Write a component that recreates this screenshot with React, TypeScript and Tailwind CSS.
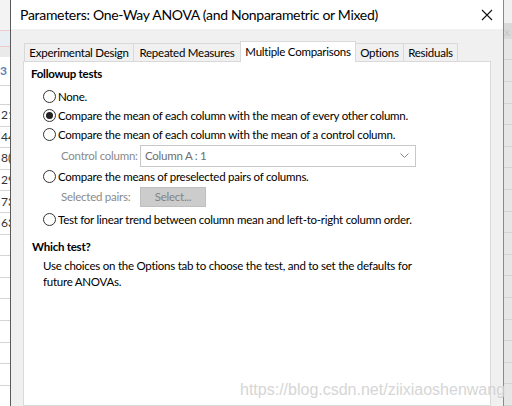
import React from "react";

const ui = { fontFamily: 'Lato, "Liberation Sans", sans-serif' };

const Radio = ({ checked }: { checked?: boolean }) => (
  <span className="w-[13px] h-[13px] rounded-full border border-[#333] bg-white flex items-center justify-center shrink-0">
    {checked && <span className="w-[7px] h-[7px] rounded-full bg-[#222]" />}
  </span>
);

const Option = ({ label, checked }: { label: string; checked?: boolean }) => (
  <div className="flex items-center gap-[2px] h-[19px] whitespace-nowrap">
    <Radio checked={checked} />
    <span>{label}</span>
  </div>
);

const SheetRows = ({ cells }: { cells: string[] }) => (
  <div className="flex flex-col">
    {cells.map((c, i) => (
      <div key={i} className="h-[21.6px] border-b border-[#d4d4d4] flex items-center text-[12px] text-[#333] overflow-hidden whitespace-nowrap pl-[1px]">
        {c}
      </div>
    ))}
  </div>
);

export default function App() {
  const tabs = [
    { t: "Experimental Design", w: "w-[110px]" },
    { t: "Repeated Measures", w: "w-[108px]" },
    { t: "Multiple Comparisons", w: "w-[116px]" },
    { t: "Options", w: "w-[49px]" },
    { t: "Residuals", w: "w-[55px]" },
  ];
  return (
    <div className="relative w-[512px] h-[406px] overflow-hidden flex bg-white" style={ui}>
      {/* sheet left */}
      <div className="w-[10px] shrink-0 bg-white flex flex-col">
        <div className="h-[30px] bg-[#f3f3f3]" />
        <div className="h-[17px] bg-[#e9eef5] border-y border-[#f2c9c9]" />
        <div className="h-[10px] bg-[#eaeaea]" />
        <div className="h-[28px] bg-white flex items-center text-[12px] text-[#5b7fb5] font-bold">3</div>
        <div className="h-[20px] border-y border-[#d4d4d4]" />
        <SheetRows cells={["21", "44", "8(", "29", "73", "63", "", "", "", "", "", "", ""]} />
      </div>
      <div className="w-px bg-[#5a5a5a] shrink-0" />

      {/* dialog */}
      <div className="flex-1 flex flex-col bg-[#f0f0f0] min-w-0">
        <div className="h-[29px] bg-white flex items-center justify-between pl-[9px] pr-[10px] shrink-0">
          <span className="text-[14px] tracking-[-0.3px] text-black whitespace-nowrap">Parameters: One-Way ANOVA (and Nonparametric or Mixed)</span>
          <svg width="12" height="12" viewBox="0 0 12 12">
            <path d="M1 1 L11 11 M11 1 L1 11" stroke="#111" strokeWidth="1.1" />
          </svg>
        </div>
        <div className="flex-1 flex flex-col pl-[12px] pr-[12px] pt-[11px]">
          <div className="flex items-end h-[21px] pl-[1px] text-[11.5px] tracking-[-0.25px] text-black whitespace-nowrap">
            {tabs.map(({ t, w }) =>
              t === "Multiple Comparisons" ? (
                <div key={t} className={`${w} h-[21px] -mb-px -ml-px bg-white border border-b-0 border-[#d9d9d9] flex items-center justify-center relative z-10`}>
                  {t}
                </div>
              ) : (
                <div key={t} className={`${w} h-[18px] bg-[#f0f0f0] border border-b-0 border-[#d9d9d9] -ml-px first:ml-0 flex items-center justify-center`}>
                  {t}
                </div>
              )
            )}
          </div>
          <div className="flex-1 bg-white border border-[#d9d9d9] text-[11.5px] tracking-[-0.25px] text-black pl-[7px] pt-[3px]">
            <div className="font-bold h-[18px] flex items-center">Followup tests</div>
            <div className="pl-[12px] pt-[4px] flex flex-col">
              <Option label="None." />
              <Option label="Compare the mean of each column with the mean of every other column." checked />
              <Option label="Compare the mean of each column with the mean of a control column." />
              <div className="flex items-center h-[23px] pl-[18px] whitespace-nowrap">
                <span className="text-[#8a8a8a] w-[79px]">Control column:</span>
                <div className="w-[276px] h-[22px] border border-[#c8c8c8] bg-white flex items-center justify-between pl-[4px] pr-[6px] text-[#6d6d6d]">
                  <span>Column A : 1</span>
                  <svg width="9" height="5" viewBox="0 0 9 5">
                    <path d="M0.5 0.5 L4.5 4.5 L8.5 0.5" stroke="#888" strokeWidth="1" fill="none" />
                  </svg>
                </div>
              </div>
              <Option label="Compare the means of preselected pairs of columns." />
              <div className="flex items-center h-[22px] pl-[18px] whitespace-nowrap">
                <span className="text-[#8a8a8a] w-[79px]">Selected pairs:</span>
                <div className="w-[66px] h-[20px] border border-[#bfbfbf] bg-[#cccccc] text-[#838383] flex items-center justify-center">
                  Select...
                </div>
              </div>
              <div className="pt-[2px]">
                <Option label="Test for linear trend between column mean and left-to-right column order." />
              </div>
            </div>
            <div className="font-bold h-[18px] flex items-center mt-[9px] pl-[1px]">Which test?</div>
            <div className="pl-[12px] pt-[2px] leading-[16px] whitespace-nowrap">
              Use choices on the Options tab to choose the test, and to set the defaults for
              <br />
              future ANOVAs.
            </div>
          </div>
        </div>
      </div>
      <div className="w-px bg-[#8a8a8a] shrink-0" />

      {/* sheet right */}
      <div className="w-[8px] shrink-0 bg-[#e6e6e6] flex flex-col">
        <div className="h-[28px] bg-[#f0f0f0]" />
        <div className="h-[20px] bg-[#d9d9d9] text-[12px] text-[#c7c7c7] overflow-hidden">x</div>
        <SheetRows cells={["", "", "", "", "", "", "", "", "", "", "", "", "", "", "", "", ""]} />
      </div>

      <div
        className="absolute left-[240px] top-[378px] text-[16px] text-[#d2d2d2] opacity-90 whitespace-nowrap"
        style={{ fontFamily: '"Liberation Sans", Arial, sans-serif' }}
      >
        https://blog.csdn.net/ziixiaoshenwang
      </div>
    </div>
  );
}
